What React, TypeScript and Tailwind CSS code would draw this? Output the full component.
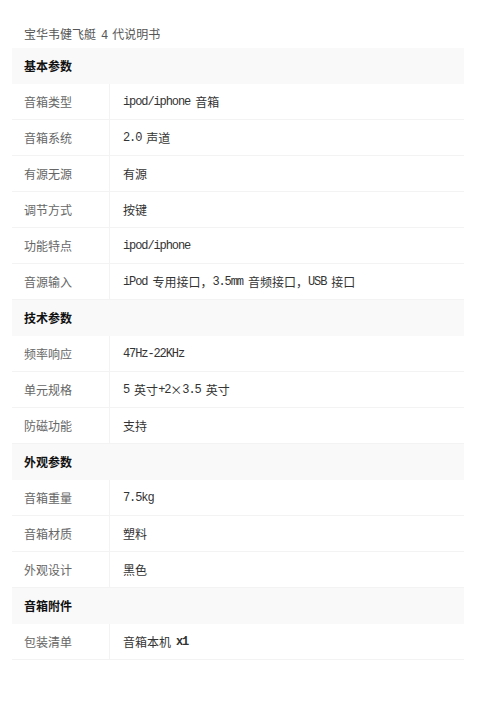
import React from "react";

type Row = { k: string; v: React.ReactNode } | { h: string };

const cjk = '"Noto Sans CJK SC", sans-serif';
const mono = '"Liberation Mono", "Noto Sans CJK SC", monospace';

const M = ({ children }: { children: React.ReactNode }) => (
  <span style={{ fontFamily: mono }} className="text-[12px] tracking-[-1.1px]">
    {children}
  </span>
);
const S = () => <span className="inline-block w-[5px]" />;

const rows: Row[] = [
  { h: "基本参数" },
  { k: "音箱类型", v: <><M>ipod/iphone</M><S />音箱</> },
  { k: "音箱系统", v: <><M>2.0</M><S />声道</> },
  { k: "有源无源", v: "有源" },
  { k: "调节方式", v: "按键" },
  { k: "功能特点", v: <M>ipod/iphone</M> },
  { k: "音源输入", v: <><M>iPod</M><S />专用接口，<M>3.5mm</M><S />音频接口，<M>USB</M><S />接口</> },
  { h: "技术参数" },
  { k: "频率响应", v: <M>47Hz-22KHz</M> },
  { k: "单元规格", v: <><M>5</M><S />英寸<M>+2</M>×<M>3.5</M><S />英寸</> },
  { k: "防磁功能", v: "支持" },
  { h: "外观参数" },
  { k: "音箱重量", v: <M>7.5kg</M> },
  { k: "音箱材质", v: "塑料" },
  { k: "外观设计", v: "黑色" },
  { h: "音箱附件" },
  { k: "包装清单", v: <>音箱本机<S /><span style={{ fontFamily: mono }} className="text-[12px] font-bold tracking-[-1.1px]">x1</span></> },
];

export default function App() {
  return (
    <div className="w-[496px] h-[702px] bg-white" style={{ fontFamily: cjk }}>
      <div className="pl-[24px] pt-[25px] h-[48px] text-[12px] text-[#555] leading-[18px]">
        宝华韦健飞艇<S /><M>4</M><S />代说明书
      </div>
      <div className="ml-[12px] w-[452px]">
        {rows.map((r, i) =>
          "h" in r ? (
            <div
              key={i}
              className="h-[36px] flex items-center pl-[12px] bg-[#f9f9f9] text-[12px] font-bold text-[#111]"
            >
              {r.h}
            </div>
          ) : (
            <div key={i} className="h-[36px] flex border-b border-[#f3f3f3] text-[12px]">
              <div className="w-[98px] shrink-0 flex items-center pl-[12px] text-[#666] border-r border-[#f3f3f3]">
                {r.k}
              </div>
              <div className="flex items-center pl-[13px] text-[#333]">{r.v}</div>
            </div>
          )
        )}
      </div>
    </div>
  );
}
